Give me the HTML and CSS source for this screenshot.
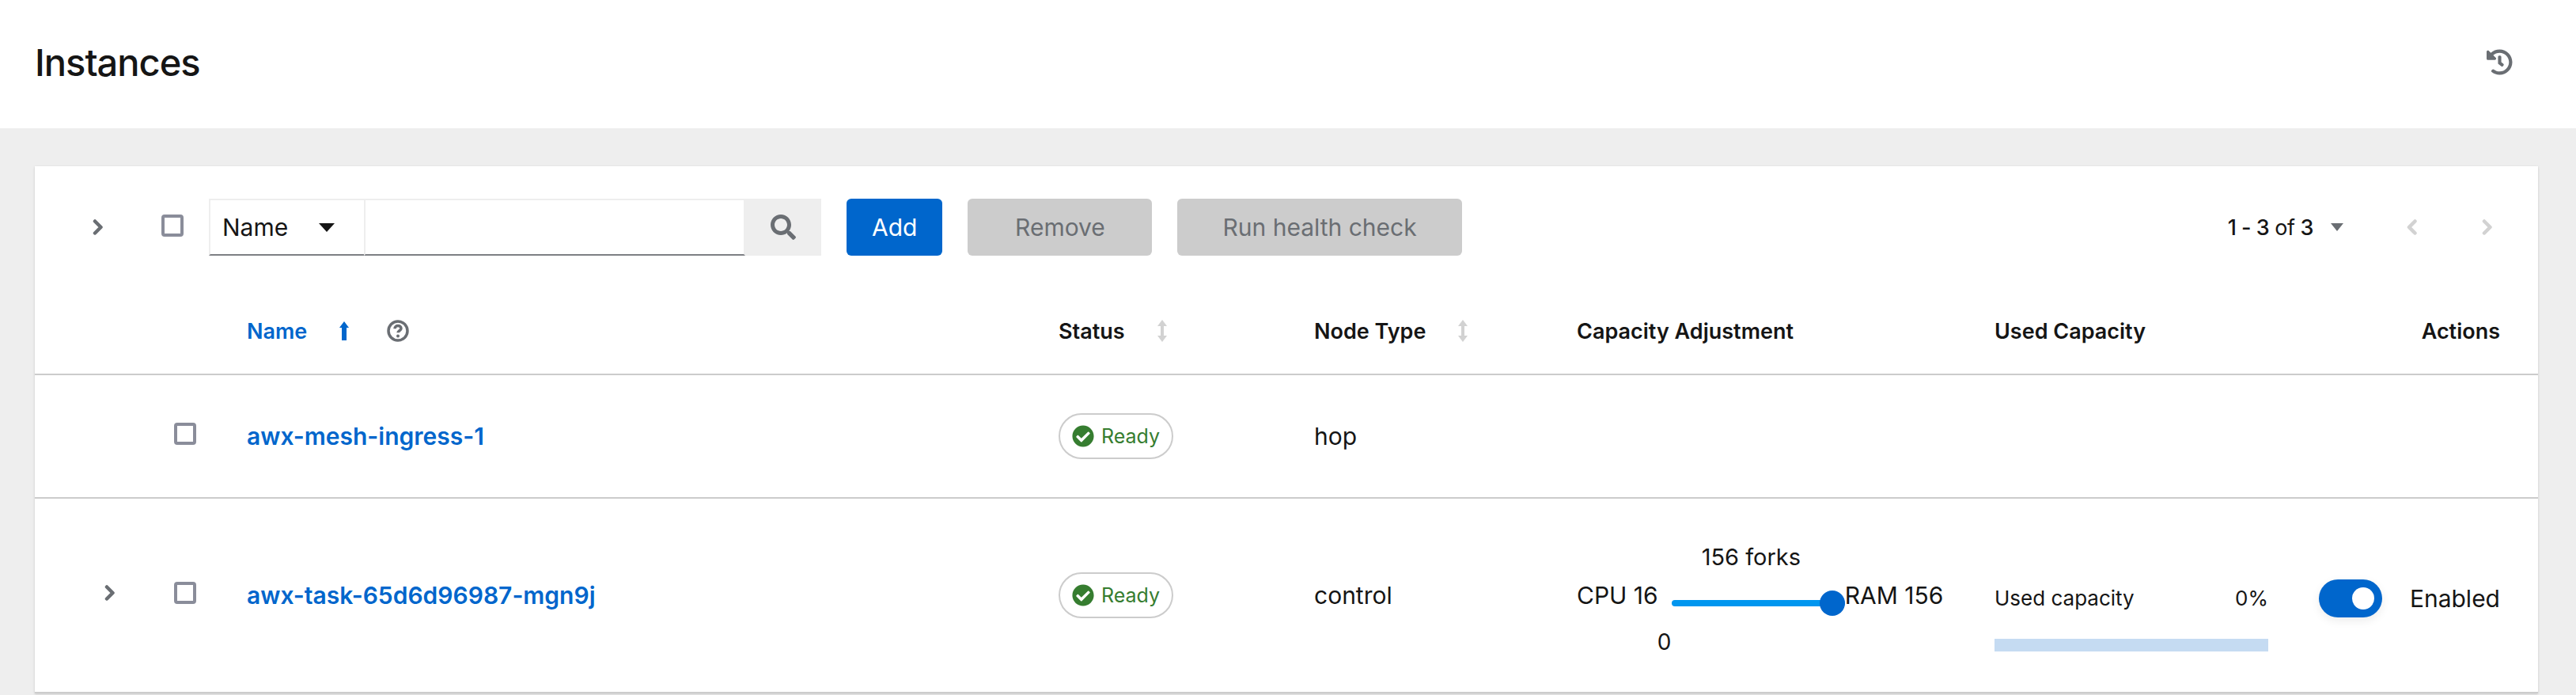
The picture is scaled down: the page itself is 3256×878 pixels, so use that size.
FILE: index.html
```html
<!DOCTYPE html>
<html lang="en">
<head>
    <meta charset="UTF-8">
    <meta name="viewport" content="width=device-width, initial-scale=1.0">
    <title>Instances</title>
    <link rel="stylesheet" href="styles.css">
</head>
<body>
    <header class="page-header">
        <h1>Instances</h1>
        <svg class="history-icon" viewBox="0 0 512 512"><path d="M504 255.500C504.300 392.200 392.600 504 255.900 504c-59 0-113.300-20.600-155.900-55a24 24 0 0 1-1.800-35.600l11.300-11.300a24 24 0 0 1 31.800-2c31.400 24.900 70.700 39.900 114.600 39.900 101.500 0 183-82.100 183-183.500S357.400 72 256 72c-48.700 0-92.900 18.900-125.700 49.700l50.800 50.800c15.100 15.100 4.400 41-17 41H24c-13.300 0-24-10.700-24-24V49.400c0-21.400 25.900-32.100 41-17l41.300 41.300C127 31.500 187.900 8 256 8c136.700 0 247.700 110.800 248 247.500zM321.900 334.300l9.800-12.600a24 24 0 0 0-4.200-33.700L288 257.200V152a24 24 0 0 0-24-24h-16a24 24 0 0 0-24 24v136.600l64.200 49.900a24 24 0 0 0 33.700-4.200z"/></svg>
    </header>

    <main>
        <section class="card">
            <div class="toolbar">
                <svg class="chevron toolbar-chevron" viewBox="0 0 14 20"><path d="M3 2.500l7.500 7.500-7.500 7.500" /></svg>
                <span class="checkbox"></span>
                <div class="search">
                    <div class="search-select">Name <span class="caret"></span></div>
                    <div class="search-input"></div>
                    <div class="search-button">
                        <svg viewBox="0 0 512 512"><path d="M505 442.700 405.300 343c-4.500-4.500-10.600-7-17-7H372c27.600-35.300 44-79.700 44-128C416 93.100 322.900 0 208 0S0 93.100 0 208s93.100 208 208 208c48.300 0 92.700-16.400 128-44v16.300c0 6.400 2.500 12.500 7 17l99.700 99.700c9.400 9.400 24.600 9.400 33.900 0l28.300-28.300c9.400-9.400 9.400-24.600.1-34zM208 336c-70.700 0-128-57.200-128-128 0-70.700 57.200-128 128-128 70.700 0 128 57.200 128 128 0 70.700-57.200 128-128 128z"/></svg>
                    </div>
                </div>
                <button class="btn btn-primary">Add</button>
                <button class="btn btn-disabled">Remove</button>
                <button class="btn btn-disabled">Run health check</button>
                <div class="pagination">
                    <span class="page-count"><b>1 - 3</b> of <b>3</b></span>
                    <span class="caret caret-small"></span>
                    <svg class="chevron chevron-off page-prev" viewBox="0 0 14 20"><path d="M10.500 2.500l-7.500 7.500 7.500 7.500" /></svg>
                    <svg class="chevron chevron-off page-next" viewBox="0 0 14 20"><path d="M3 2.500l7.500 7.500-7.500 7.500" /></svg>
                </div>
            </div>

            <table class="instances">
                <colgroup>
                    <col class="col-select">
                    <col class="col-name">
                    <col class="col-status">
                    <col class="col-type">
                    <col class="col-capacity">
                    <col class="col-used">
                    <col class="col-actions">
                </colgroup>
                <thead>
                    <tr>
                        <th></th>
                        <th>
                            <div class="th-inner">
                                <span class="sort-active">Name</span>
                                <svg class="arrow-up" viewBox="0 0 14 26"><path d="M7 1l6 8H10v16H4V9H1z"/></svg>
                                <svg class="help-icon" viewBox="0 0 28 28"><circle cx="14" cy="14" r="12" /><path d="M10 11.200c0-2.300 1.800-3.700 4-3.700s4 1.300 4 3.400c0 2.800-4 2.800-4 5.400" /><circle class="help-dot" cx="14" cy="20.500" r="2" /></svg>
                            </div>
                        </th>
                        <th>
                            <div class="th-inner th-status">Status <svg class="sort-icon" viewBox="0 0 14 28"><path d="M7 0l6 8H9v12h4l-6 8-6-8h4V8H1z"/></svg></div>
                        </th>
                        <th>
                            <div class="th-inner th-type">Node Type <svg class="sort-icon" viewBox="0 0 14 28"><path d="M7 0l6 8H9v12h4l-6 8-6-8h4V8H1z"/></svg></div>
                        </th>
                        <th>Capacity Adjustment</th>
                        <th>Used Capacity</th>
                        <th class="th-actions">Actions</th>
                    </tr>
                </thead>
                <tbody>
                    <tr class="row-short">
                        <td>
                            <div class="select-cell"><span class="checkbox"></span></div>
                        </td>
                        <td><a class="instance-link" href="#">awx-mesh-ingress-1</a></td>
                        <td>
                            <span class="ready-label">
                                <svg viewBox="0 0 512 512"><path d="M504 256c0 137-111 248-248 248S8 393 8 256 119 8 256 8s248 111 248 248zM227.300 387.300l184-184c6.200-6.200 6.200-16.400 0-22.600l-22.600-22.600c-6.200-6.200-16.400-6.200-22.600 0L216 308.100l-70.100-70.100c-6.200-6.200-16.400-6.200-22.600 0l-22.600 22.600c-6.200 6.200-6.200 16.400 0 22.600l104 104c6.200 6.200 16.400 6.200 22.600 0z"/></svg>
                                Ready
                            </span>
                        </td>
                        <td>hop</td>
                        <td></td>
                        <td></td>
                        <td></td>
                    </tr>
                    <tr class="row-tall">
                        <td>
                            <div class="select-cell">
                                <svg class="chevron row-chevron" viewBox="0 0 14 20"><path d="M3 2.500l7.500 7.500-7.500 7.500" /></svg>
                                <span class="checkbox"></span>
                            </div>
                        </td>
                        <td><a class="instance-link" href="#">awx-task-65d6d96987-mgn9j</a></td>
                        <td>
                            <span class="ready-label">
                                <svg viewBox="0 0 512 512"><path d="M504 256c0 137-111 248-248 248S8 393 8 256 119 8 256 8s248 111 248 248zM227.300 387.300l184-184c6.200-6.200 6.200-16.400 0-22.600l-22.600-22.600c-6.200-6.200-16.400-6.200-22.600 0L216 308.100l-70.100-70.100c-6.200-6.200-16.400-6.200-22.600 0l-22.600 22.600c-6.200 6.200-6.200 16.400 0 22.600l104 104c6.200 6.200 16.400 6.200 22.600 0z"/></svg>
                                Ready
                            </span>
                        </td>
                        <td>control</td>
                        <td>
                            <div class="capacity">
                                <span class="cap-end">CPU 16</span>
                                <div class="slider">
                                    <span class="slider-forks">156 forks</span>
                                    <div class="slider-track"><span class="slider-thumb"></span></div>
                                    <span class="slider-zero">0</span>
                                </div>
                                <span class="cap-end">RAM 156</span>
                            </div>
                        </td>
                        <td>
                            <div class="used">
                                <div class="used-head"><span>Used capacity</span><span>0%</span></div>
                                <div class="used-bar"></div>
                            </div>
                        </td>
                        <td>
                            <div class="enabled">
                                <span class="switch"><span class="switch-knob"></span></span>
                                <span>Enabled</span>
                            </div>
                        </td>
                    </tr>
                </tbody>
            </table>
        </section>
    </main>
</body>
</html>
```

FILE: styles.css
```css
* {
    box-sizing: border-box;
}

html, body {
    height: 878px;
    overflow: hidden;
}

body {
    margin: 0;
    font-family: Inter, "Liberation Sans", sans-serif;
    font-size: 30px;
    color: #151515;
    background-color: #eeeeee;
}

.page-header {
    height: 162px;
    background-color: white;
    display: flex;
    align-items: center;
    justify-content: space-between;
    padding: 0 80px 6px 44px;
}

.page-header h1 {
    margin: 0;
    font-size: 47px;
    font-weight: 500;
    letter-spacing: -1px;
}

.history-icon {
    width: 33px;
    height: 33px;
    fill: #6a6e73;
}

main {
    padding: 48px 48px 0 44px;
}

.card {
    background-color: white;
    box-shadow: 0 1px 3px rgba(3, 3, 3, 0.16);
}

.toolbar {
    display: flex;
    align-items: center;
    height: 154px;
    padding-right: 57px;
    padding-left: 73px;
}

.chevron {
    width: 14px;
    height: 20px;
    fill: none;
    stroke: #6a6e73;
    stroke-width: 4.500;
    stroke-linecap: round;
    stroke-linejoin: round;
}

.chevron-off {
    stroke: #d2d2d2;
}

.toolbar-chevron {
    margin-right: 73px;
}

.checkbox {
    display: block;
    width: 28px;
    height: 28px;
    border: 4px solid #8a8d9a;
    border-radius: 4px;
    background-color: white;
}

.toolbar .checkbox {
    margin-bottom: 4px;
}

.search {
    display: flex;
    height: 72px;
    margin-left: 32px;
}

.search-select {
    display: flex;
    align-items: center;
    justify-content: space-between;
    width: 196px;
    padding: 0 37px 0 15px;
    border: 2px solid #eeeeee;
    border-bottom: 2px solid #7d7f84;
    border-right: none;
}

.caret {
    width: 0;
    height: 0;
    border-left: 10px solid transparent;
    border-right: 10px solid transparent;
    border-top: 11px solid #151515;
}

.caret-small {
    border-left-width: 8px;
    border-right-width: 8px;
    border-top: 10px solid #6a6e73;
    margin-left: 22px;
}

.search-input {
    width: 482px;
    border: 2px solid #eeeeee;
    border-bottom: 2px solid #7d7f84;
}

.search-button {
    width: 96px;
    background-color: #eeeeee;
    display: flex;
    align-items: center;
    justify-content: center;
}

.search-button svg {
    width: 32px;
    height: 32px;
    fill: #6a6e73;
}

.btn {
    height: 72px;
    border: none;
    border-radius: 6px;
    font-family: inherit;
    font-size: 30px;
    margin-left: 32px;
}

.btn-primary {
    background-color: #0066cc;
    color: white;
    padding: 0 32px;
}

.btn-disabled {
    background-color: #cccccc;
    color: #6a6e73;
    min-width: 233px;
    padding: 0 57px;
}

.pagination {
    margin-left: auto;
    display: flex;
    align-items: center;
    font-size: 27px;
    letter-spacing: -0.5px;
}

.page-count b {
    font-weight: 500;
}

.page-prev {
    margin-left: 80px;
}

.page-next {
    margin-left: 81px;
}

.instances {
    width: 100%;
    border-collapse: collapse;
    table-layout: fixed;
}

.col-select { width: 268px; }
.col-name { width: 1026px; }
.col-status { width: 323px; }
.col-type { width: 332px; }
.col-capacity { width: 528px; }
.col-used { width: 410px; }

th {
    height: 109px;
    padding: 0;
    font-size: 27px;
    font-weight: 600;
    text-align: left;
    border-bottom: 2px solid #cccccc;
}

td {
    padding: 0;
    border-bottom: 2px solid #cccccc;
}

.row-short td {
    height: 156px;
}

.row-tall td {
    height: 246px;
}

.th-inner {
    display: flex;
    align-items: center;
}

.sort-active {
    color: #0066cc;
}

.arrow-up {
    width: 14px;
    height: 26px;
    fill: #0066cc;
    margin-left: 40px;
}

.help-icon {
    width: 28px;
    height: 28px;
    margin-left: 47px;
    fill: none;
    stroke: #6a6e73;
    stroke-width: 3.500;
}

.help-dot {
    fill: #6a6e73;
    stroke: none;
}

.sort-icon {
    width: 14px;
    height: 28px;
    fill: #d2d2d2;
}

.th-status .sort-icon {
    margin-left: 40px;
}

.th-type .sort-icon {
    margin-left: 40px;
}

.th-actions {
    text-align: right;
    padding-right: 48px;
}

.select-cell {
    display: flex;
    align-items: center;
    justify-content: flex-end;
    padding-right: 64px;
    padding-bottom: 6px;
}

.row-chevron {
    margin-right: 74px;
}

.instance-link {
    color: #0066cc;
    font-weight: 600;
    text-decoration: none;
}

.ready-label {
    display: inline-flex;
    align-items: center;
    height: 58px;
    padding: 0 15px;
    gap: 9px;
    border: 2px solid #cccccc;
    border-radius: 29px;
    color: #367d30;
    font-size: 25px;
}

.ready-label svg {
    width: 28px;
    height: 28px;
    fill: #367d30;
}

.capacity {
    display: flex;
    align-items: center;
}

.slider {
    position: relative;
    width: 219px;
    margin-left: 17px;
    margin-top: 20px;
    height: 32px;
    display: flex;
    align-items: center;
}

.slider-track {
    position: relative;
    width: 100%;
    height: 8px;
    border-radius: 4px;
    background-color: #0096ef;
}

.slider-thumb {
    position: absolute;
    right: 0;
    top: -12px;
    width: 32px;
    height: 32px;
    border-radius: 50%;
    background-color: #0066cc;
}

.slider-forks {
    position: absolute;
    top: -60px;
    left: 38px;
    white-space: nowrap;
    font-size: 29px;
}

.slider-zero {
    position: absolute;
    top: 48px;
    left: -18px;
    font-size: 28px;
}

.used {
    width: 346px;
    padding-top: 56px;
}

.used-head {
    display: flex;
    justify-content: space-between;
    align-items: center;
    height: 36px;
    font-size: 26px;
    margin-bottom: 34px;
}

.used-bar {
    height: 16px;
    background-color: #c5dbf2;
}

.enabled {
    display: flex;
    align-items: center;
    gap: 35px;
    padding: 7px 48px 0 0;
    justify-content: flex-end;
}

.switch {
    position: relative;
    display: block;
    width: 80px;
    height: 48px;
    border-radius: 24px;
    background-color: #0066cc;
    box-shadow: 0 4px 12px rgba(3, 3, 3, 0.08);
}

.switch-knob {
    position: absolute;
    top: 10px;
    right: 10px;
    width: 28px;
    height: 28px;
    border-radius: 50%;
    background-color: white;
}
```
